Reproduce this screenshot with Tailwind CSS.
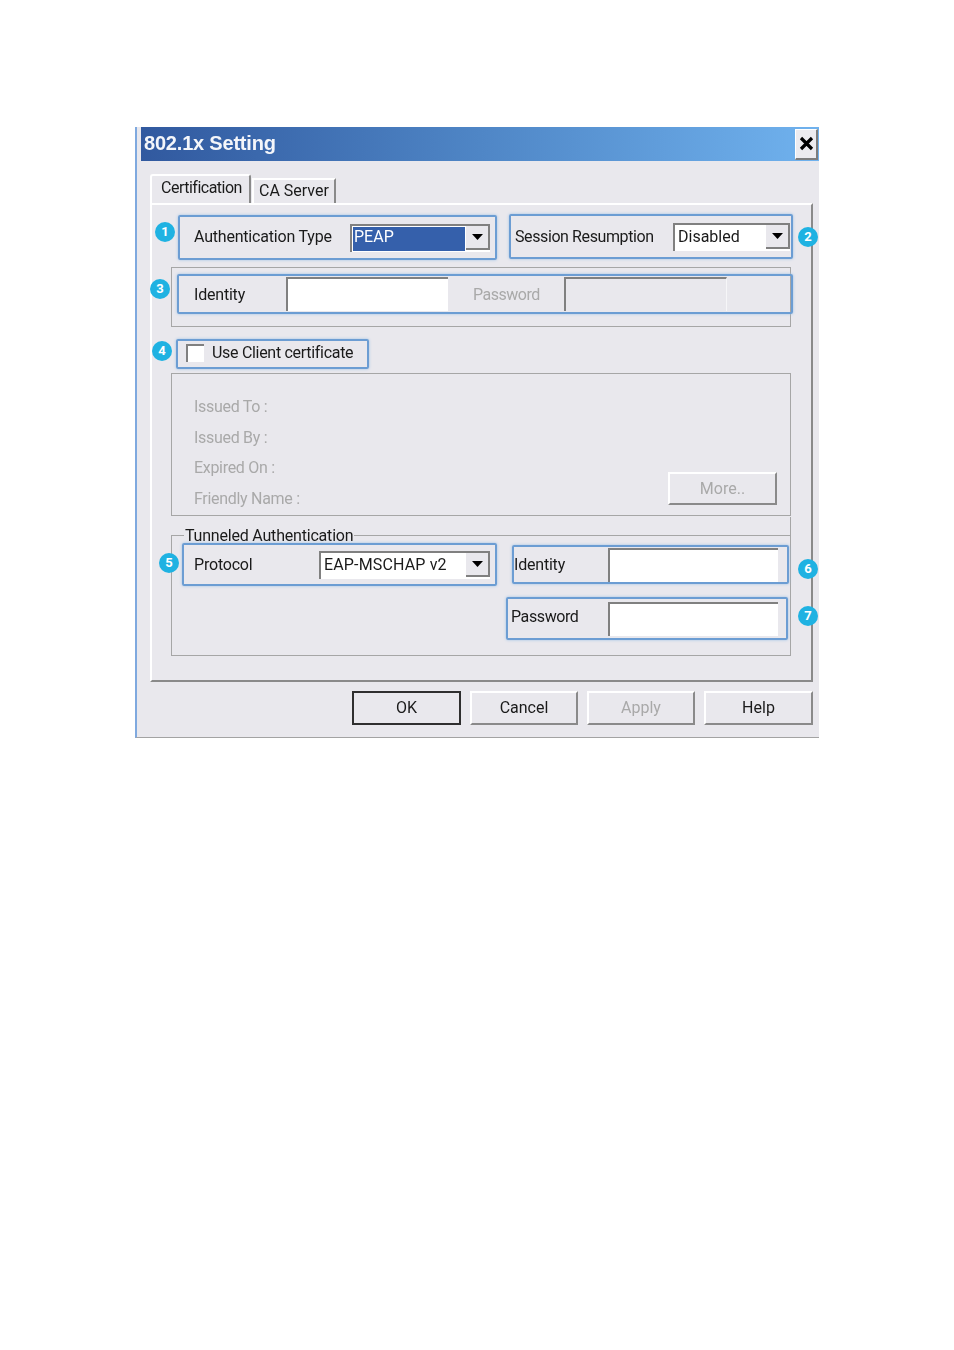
<!DOCTYPE html>
<html lang="en">
<head>
    <meta charset="UTF-8">
    <title>802.1x Setting</title>
    <script src="https://cdn.jsdelivr.net/npm/@tailwindcss/browser@4"></script>
</head>
<body class="bg-white min-h-screen font-['Roboto',sans-serif] text-[16px] text-[#1a1a1a] whitespace-nowrap">
<div class="pt-[127px] pl-[135px]">
    <div class="relative w-[684px] h-[611px]">
        <!-- dialog -->
        <div class="w-full h-full box-border bg-[#e9e8ed] border-l-2 border-b border-l-[#7fa9df] border-b-[#a3a3a3] blur-[0.5px]">
            <div class="ml-[4px] h-[34px] flex items-center justify-between bg-linear-to-r from-[#31599f] via-[#4f86c6] to-[#70b2ee]">
                <span class="ml-[3px] -mt-[2px] font-['Liberation_Sans',sans-serif] font-bold text-[20px] tracking-[-0.2px] text-[#f4f6fa]">802.1x Setting</span>
                <div class="w-[23px] h-[31px] mr-px flex items-center justify-center bg-[#ecebef] border-t border-l border-white border-r-2 border-b-2 border-r-[#7d7d7d] border-b-[#7d7d7d] box-border">
                    <svg width="15" height="15" viewBox="0 0 15 15"><path d="M2 2 L13 13 M13 2 L2 13" stroke="#000" stroke-width="3.2"/></svg>
                </div>
            </div>

            <div class="ml-[13px] mt-[13px] flex items-end h-[29px]">
                <div class="w-[101px] h-[29px] pl-[9px] pb-[4px] tracking-[-0.5px] border-t-2 border-l-2 border-white rounded-t-[3px] border-r-2 border-r-[#8a8a8a] box-border flex items-center">Certification</div>
                <div class="w-[84px] h-[25px] ml-px pl-[5px] pb-[2px] border-t-2 border-l-2 border-white border-r-2 border-r-[#8a8a8a] box-border flex items-center">CA Server</div>
            </div>

            <div class="ml-[13px] w-[663px] h-[479px] box-border border-2 border-t-white border-l-white border-r-[#8a8a8a] border-b-[#8a8a8a]">
                <div class="flex items-start mt-[9px]">
                    <div class="ml-[26px] mt-px w-[319px] h-[45px] box-border border-2 border-[#6c9dd3] rounded-[2px] shadow-[0_0_3px_#9cc0e6] flex items-center">
                        <span class="ml-[14px] w-[156px] -mt-[1px] tracking-[-0.2px]">Authentication Type</span>
                        <div class="w-[140px] h-[28px] box-border flex border-t-2 border-l-2 border-[#808080] bg-white">
                            <div class="flex-1 m-[1px] bg-[#3560ab] text-white pl-[1px] leading-[20px]">PEAP</div>
                            <div class="w-[24px] h-[24px] box-border bg-[#e9e8ed] border-r-2 border-b-2 border-[#808080] flex items-center justify-center">
                                <svg width="11" height="6" viewBox="0 0 11 6"><path d="M0 0 H11 L5.5 6 Z" fill="#000"/></svg>
                            </div>
                        </div>
                    </div>
                    <div class="ml-[12px] w-[284px] h-[45px] box-border border-2 border-[#6c9dd3] rounded-[2px] shadow-[0_0_3px_#9cc0e6] flex items-center">
                        <span class="ml-[4px] w-[158px] tracking-[-0.4px]">Session Resumption</span>
                        <div class="w-[117px] h-[28px] box-border flex border-t-2 border-l-2 border-[#808080] bg-white">
                            <div class="flex-1 pl-[3px] leading-[23px]">Disabled</div>
                            <div class="w-[24px] h-[24px] box-border bg-[#e9e8ed] border-r-2 border-b-2 border-[#808080] flex items-center justify-center">
                                <svg width="11" height="6" viewBox="0 0 11 6"><path d="M0 0 H11 L5.5 6 Z" fill="#000"/></svg>
                            </div>
                        </div>
                    </div>
                </div>

                <div class="ml-[19px] mt-[7px] w-[620px] h-[60px] box-border border border-[#a6a6a6] pt-[6px] pl-[5px]">
                    <div class="w-[616px] h-[40px] box-border border-2 border-[#6c9dd3] rounded-[2px] shadow-[0_0_3px_#9cc0e6] flex items-center">
                        <span class="ml-[15px] w-[92px] mt-[1px] tracking-[-0.2px]">Identity</span>
                        <div class="w-[162px] h-[34px] box-border border-t-2 border-l-2 border-[#808080] bg-white"></div>
                        <span class="ml-[25px] w-[91px] mt-[1px] tracking-[-0.5px] text-[#a9a9a9]">Password</span>
                        <div class="w-[163px] h-[34px] box-border border-t-2 border-l-2 border-[#808080] border-r border-r-[#f6f6f8]"></div>
                    </div>
                </div>

                <div class="ml-[24px] mt-[12px] w-[193px] h-[30px] box-border border-2 border-[#6c9dd3] rounded-[2px] shadow-[0_0_3px_#9cc0e6] flex items-center">
                    <div class="ml-[8px] -mt-[2px] w-[18px] h-[18px] box-border border-t-2 border-l-2 border-[#808080] bg-white"></div>
                    <span class="ml-[8px] -mt-[3px] tracking-[-0.3px]">Use Client certificate</span>
                </div>

                <div class="ml-[19px] mt-[4px] w-[620px] h-[143px] box-border border border-[#a6a6a6] flex justify-between text-[#a9a9a9]">
                    <div class="ml-[22px] mt-[23px] flex flex-col gap-[10.5px] leading-[20px] tracking-[-0.3px]">
                        <span>Issued To :</span>
                        <span>Issued By :</span>
                        <span>Expired On :</span>
                        <span>Friendly Name :</span>
                    </div>
                    <div class="self-end mb-[10px] mr-[13px] w-[109px] h-[33px] box-border border-t-2 border-l-2 border-white border-r-2 border-b-2 border-r-[#8a8a8a] border-b-[#8a8a8a] flex items-center justify-center">More..</div>
                </div>

                <div class="relative ml-[19px] mt-[19px] w-[620px] h-[121px] box-border border border-[#a6a6a6] pt-[7px]">
                    <span class="absolute left-[12px] -top-[9px] px-px bg-[#e9e8ed] leading-[18px] tracking-[-0.2px]">Tunneled Authentication</span>
                    <div class="absolute -right-px -top-[19px] w-px h-[19px] bg-[#a6a6a6]"></div>
                    <div class="relative flex items-start">
                        <div class="ml-[10px] w-[315px] h-[43px] box-border border-2 border-[#6c9dd3] rounded-[2px] shadow-[0_0_3px_#9cc0e6] flex items-center">
                            <span class="ml-[10px] w-[125px] tracking-[-0.2px]">Protocol</span>
                            <div class="w-[171px] h-[28px] box-border flex border-t-2 border-l-2 border-[#808080] bg-white">
                                <div class="flex-1 pl-[3px] leading-[23px] tracking-[0.15px]">EAP-MSCHAP v2</div>
                                <div class="w-[24px] h-[24px] box-border bg-[#e9e8ed] border-r-2 border-b-2 border-[#808080] flex items-center justify-center">
                                    <svg width="11" height="6" viewBox="0 0 11 6"><path d="M0 0 H11 L5.5 6 Z" fill="#000"/></svg>
                                </div>
                            </div>
                        </div>
                        <div class="flex flex-col items-end">
                            <div class="ml-[15px] mt-[2px] w-[277px] h-[39px] box-border border-2 border-[#6c9dd3] rounded-[2px] shadow-[0_0_3px_#9cc0e6] flex items-center">
                                <span class="w-[94px] tracking-[-0.2px]">Identity</span>
                                <div class="w-[170px] h-[34px] mt-[1px] box-border border-t-2 border-l-2 border-[#808080] bg-white"></div>
                            </div>
                            <div class="mt-[13px] mr-px w-[282px] h-[43px] box-border border-2 border-[#6c9dd3] rounded-[2px] shadow-[0_0_3px_#9cc0e6] flex items-center">
                                <span class="ml-[3px] w-[97px] -mt-[3px] tracking-[-0.4px]">Password</span>
                                <div class="w-[170px] h-[34px] box-border border-t-2 border-l-2 border-[#808080] bg-white"></div>
                            </div>
                        </div>
                    </div>
                </div>
            </div>

            <div class="ml-[215px] mt-[9px] flex gap-[9px] text-center">
                <div class="w-[109px] h-[34px] box-border border-2 border-[#2f2f2f] flex items-center justify-center">OK</div>
                <div class="w-[108px] h-[34px] box-border border-2 border-t-white border-l-white border-r-[#8a8a8a] border-b-[#8a8a8a] flex items-center justify-center">Cancel</div>
                <div class="w-[108px] h-[34px] box-border border-2 border-t-white border-l-white border-r-[#8a8a8a] border-b-[#8a8a8a] flex items-center justify-center text-[#a9a9a9]">Apply</div>
                <div class="w-[109px] h-[34px] box-border border-2 border-t-white border-l-white border-r-[#8a8a8a] border-b-[#8a8a8a] flex items-center justify-center">Help</div>
            </div>
        </div>

        <!-- numbered callouts -->
        <span class="absolute left-[20px] top-[95px] w-[20px] h-[20px] rounded-full bg-[#1fb2e2] text-white text-[13px] font-bold flex items-center justify-center">1</span>
        <span class="absolute left-[663px] top-[100px] w-[20px] h-[20px] rounded-full bg-[#1fb2e2] text-white text-[13px] font-bold flex items-center justify-center">2</span>
        <span class="absolute left-[15px] top-[152px] w-[20px] h-[20px] rounded-full bg-[#1fb2e2] text-white text-[13px] font-bold flex items-center justify-center">3</span>
        <span class="absolute left-[17px] top-[214px] w-[20px] h-[20px] rounded-full bg-[#1fb2e2] text-white text-[13px] font-bold flex items-center justify-center">4</span>
        <span class="absolute left-[24px] top-[426px] w-[20px] h-[20px] rounded-full bg-[#1fb2e2] text-white text-[13px] font-bold flex items-center justify-center">5</span>
        <span class="absolute left-[663px] top-[432px] w-[20px] h-[20px] rounded-full bg-[#1fb2e2] text-white text-[13px] font-bold flex items-center justify-center">6</span>
        <span class="absolute left-[663px] top-[479px] w-[20px] h-[20px] rounded-full bg-[#1fb2e2] text-white text-[13px] font-bold flex items-center justify-center">7</span>
    </div>
</div>
</body>
</html>
